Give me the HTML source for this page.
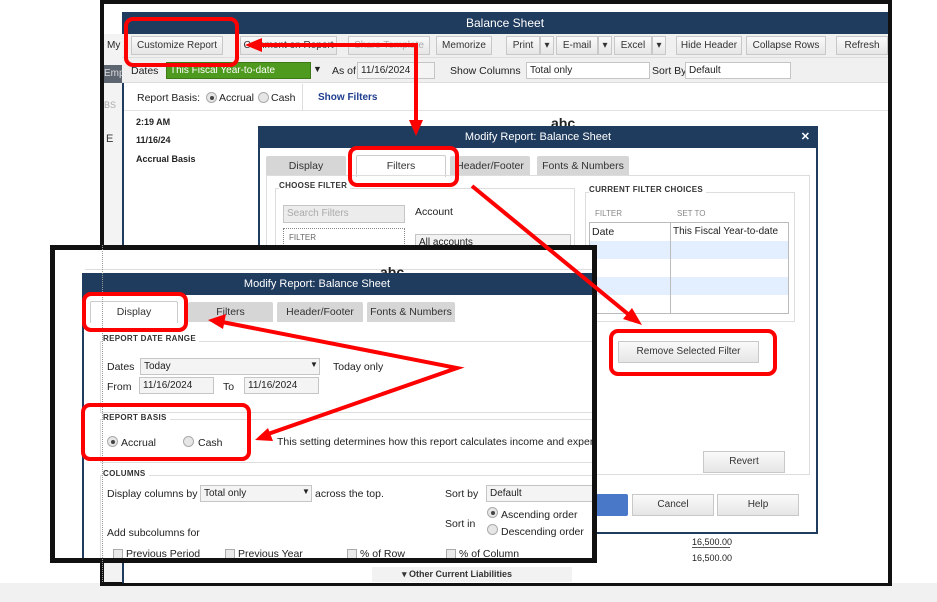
<!DOCTYPE html>
<html><head><meta charset="utf-8"><style>
*{box-sizing:border-box;margin:0;padding:0}
body{width:937px;height:602px;position:relative;overflow:hidden;background:#fff;font-family:"Liberation Sans",sans-serif;font-size:10.5px;color:#222}
.a{position:absolute}
.nav{background:#1f3b5e;color:#fff;text-align:center;font-size:12px}
.btn{position:absolute;height:19px;border:1px solid #c8c8c8;background:linear-gradient(#fafafa,#e6e6e6);font-size:10px;text-align:center;line-height:17px;color:#333}
.inp{position:absolute;height:17px;border:1px solid #c5c5c5;background:#f4f4f4;font-size:10px;line-height:15px;padding-left:3px}
.tab{position:absolute;height:20px;background:#d6d6d6;text-align:center;line-height:20px;font-size:10.5px;color:#333;border-radius:2px 2px 0 0}
.tab.on{background:#fff;border:1px solid #ccc;border-bottom:none}
.lbl{position:absolute;font-size:8px;font-weight:bold;color:#333;letter-spacing:.3px;background:#fff;padding-right:3px}
.rad{position:absolute;width:11px;height:11px;border-radius:50%;border:1px solid #aaa;background:#e6e6e6}
.chk{position:absolute;width:10px;height:10px;border:1px solid #aaa;background:#e9e9e9}
</style></head><body>
<div class="a" style="left:0;top:583px;width:937px;height:19px;background:#f1f1f1"></div>
<div class="a" style="left:100px;top:0;width:792px;height:586px;border:4px solid #111;background:#fff"></div>
<div class="a" style="left:104px;top:4px;width:784px;height:8px;background:#fff"></div>
<div class="a" style="left:104px;top:34px;width:18px;height:548px;background:#f3f3f3"></div>
<div class="a" style="left:107px;top:40px;font-size:10px">My</div>
<div class="a" style="left:104px;top:65px;width:18px;height:18px;background:#5d6570;color:#ddd;font-size:10px;line-height:18px">Emp</div>
<div class="a" style="left:104px;top:100px;color:#aaa;font-size:9px">BS</div>
<div class="a" style="left:106px;top:133px;color:#333;font-size:11px">E</div>
<div class="a" style="left:122px;top:12px;width:766px;height:571px;border-left:2px solid #1f3b5e;background:#fff"></div>
<div class="a nav" style="left:122px;top:12px;width:766px;height:22px;line-height:22px">Balance Sheet</div>
<div class="a" style="left:122px;top:34px;width:766px;height:24px;background:#f0f0f0;border-bottom:1px solid #ddd"></div>
<div class="btn" style="left:131px;top:36px;width:92px">Customize Report</div>
<div class="btn" style="left:240px;top:36px;width:97px">Comment on Report</div>
<div class="btn" style="left:348px;top:36px;width:82px;color:#aaa">Share Template</div>
<div class="btn" style="left:436px;top:36px;width:56px">Memorize</div>
<div class="btn" style="left:506px;top:36px;width:34px">Print</div>
<div class="btn" style="left:540px;top:36px;width:14px">▾</div>
<div class="btn" style="left:556px;top:36px;width:42px">E-mail</div>
<div class="btn" style="left:598px;top:36px;width:14px">▾</div>
<div class="btn" style="left:614px;top:36px;width:38px">Excel</div>
<div class="btn" style="left:652px;top:36px;width:14px">▾</div>
<div class="btn" style="left:676px;top:36px;width:66px">Hide Header</div>
<div class="btn" style="left:746px;top:36px;width:80px">Collapse Rows</div>
<div class="btn" style="left:836px;top:36px;width:52px">Refresh</div>
<div class="a" style="left:122px;top:58px;width:766px;height:25px;background:#f0f0f0;border-bottom:1px solid #ddd"></div>
<div class="a" style="left:131px;top:65px">Dates</div>
<div class="inp" style="left:166px;top:62px;width:145px;background:#4e9a1e;color:#fff;border-color:#3d7a17">This Fiscal Year-to-date</div>
<div class="a" style="left:313px;top:64px;font-size:9px">▼</div>
<div class="a" style="left:332px;top:65px">As of</div>
<div class="inp" style="left:357px;top:62px;width:78px">11/16/2024</div>
<div class="a" style="left:450px;top:65px">Show Columns</div>
<div class="inp" style="left:526px;top:62px;width:124px;background:#fff">Total only</div>
<div class="a" style="left:652px;top:65px">Sort By</div>
<div class="inp" style="left:685px;top:62px;width:106px;background:#fff">Default</div>
<div class="a" style="left:124px;top:84px;width:764px;height:27px;border-bottom:1px solid #e2e2e2"></div>
<div class="a" style="left:137px;top:92px">Report Basis:</div>
<div class="rad" style="left:206px;top:92px"></div><div class="a" style="left:209.5px;top:95.5px;width:4px;height:4px;border-radius:50%;background:#444"></div>
<div class="a" style="left:219px;top:92px">Accrual</div>
<div class="rad" style="left:258px;top:92px"></div>
<div class="a" style="left:271px;top:92px">Cash</div>
<div class="a" style="left:302px;top:84px;width:1px;height:27px;background:#ddd"></div>
<div class="a" style="left:318px;top:92px;color:#1f3d8f;font-weight:bold;font-size:10px">Show Filters</div>
<div class="a" style="left:136px;top:117px;font-size:9px;font-weight:bold">2:19 AM</div>
<div class="a" style="left:136px;top:135px;font-size:9px;font-weight:bold">11/16/24</div>
<div class="a" style="left:136px;top:154px;font-size:9px;font-weight:bold">Accrual Basis</div>
<div class="a" style="left:551px;top:115px;font-size:14px;font-weight:bold">abc</div>
<div class="a" style="left:692px;top:537px;font-size:9px">16,500.00</div>
<div class="a" style="left:692px;top:547px;width:38px;height:1px;background:#555"></div>
<div class="a" style="left:692px;top:553px;font-size:9px">16,500.00</div>
<div class="a" style="left:372px;top:567px;width:200px;height:15px;background:#f2f2f2;font-size:9px;font-weight:bold;color:#333;padding-left:30px;line-height:15px">▾ Other Current Liabilities</div>

<div class="a" style="left:258px;top:126px;width:560px;height:408px;background:#fff;border:2px solid #1f3b5e"></div>
<div class="a nav" style="left:258px;top:126px;width:560px;height:22px;line-height:22px;font-size:11px">Modify Report: Balance Sheet<span style="position:absolute;right:8px;font-weight:bold">✕</span></div>
<div class="tab" style="left:266px;top:156px;width:80px">Display</div>
<div class="tab on" style="left:356px;top:155px;width:90px;height:22px">Filters</div>
<div class="tab" style="left:450px;top:156px;width:80px">Header/Footer</div>
<div class="tab" style="left:537px;top:156px;width:92px">Fonts &amp; Numbers</div>
<div class="a" style="left:266px;top:175px;width:544px;height:300px;border:1px solid #ddd"></div>
<div class="a" style="left:275px;top:188px;width:300px;height:70px;border:1px solid #ddd"></div>
<div class="lbl" style="left:279px;top:181px">CHOOSE FILTER</div>
<div class="inp" style="left:283px;top:205px;width:122px;height:18px;color:#aaa;background:#ececec">Search Filters</div>
<div class="a" style="left:283px;top:228px;width:122px;height:30px;border:1px dotted #888;font-size:8px;color:#666;padding:4px 5px">FILTER</div>
<div class="a" style="left:415px;top:206px">Account</div>
<div class="inp" style="left:415px;top:234px;width:156px;background:#f2f2f2">All accounts</div>
<div class="a" style="left:585px;top:192px;width:210px;height:130px;border:1px solid #ddd"></div>
<div class="lbl" style="left:589px;top:185px">CURRENT FILTER CHOICES</div>
<div class="a" style="left:595px;top:209px;font-size:8px;color:#888">FILTER</div>
<div class="a" style="left:677px;top:209px;font-size:8px;color:#888">SET TO</div>
<div class="a" style="left:589px;top:222px;width:200px;height:92px;border:1px solid #bbb;background:repeating-linear-gradient(#fff 0,#fff 18px,#e3efff 18px,#e3efff 36px)"></div>
<div class="a" style="left:670px;top:222px;width:1px;height:92px;background:#bbb"></div>
<div class="a" style="left:592px;top:226px">Date</div>
<div class="a" style="left:673px;top:226px;font-size:10px">This Fiscal Year-to-date</div>
<div class="btn" style="left:618px;top:341px;width:141px;height:22px;line-height:20px">Remove Selected Filter</div>
<div class="btn" style="left:703px;top:451px;width:82px;height:22px;line-height:20px">Revert</div>
<div class="a" style="left:590px;top:494px;width:38px;height:22px;background:#4a78c8;border-radius:2px"></div>
<div class="btn" style="left:632px;top:494px;width:82px;height:22px;line-height:20px">Cancel</div>
<div class="btn" style="left:717px;top:494px;width:82px;height:22px;line-height:20px">Help</div>

<div class="a" style="left:50px;top:245px;width:547px;height:318px;border:5px solid #111;background:#fff;overflow:hidden">
 <div class="a" style="left:30px;top:0;width:520px;height:20px;border-bottom:1px solid #ddd"></div>
 <div class="a" style="left:325px;top:14px;font-size:14px;font-weight:bold">abc</div>
 <div class="a" style="left:27px;top:23px;width:520px;height:300px;border-left:2px solid #1f3b5e"></div>
 <div class="a nav" style="left:27px;top:23px;width:520px;height:22px;line-height:22px;font-size:11px;padding-right:50px">Modify Report: Balance Sheet</div>
 <div class="a" style="left:0;top:-3px;width:547px;height:320px">
 <div class="tab on" style="left:35px;top:54px;width:88px;height:22px">Display</div>
 <div class="tab" style="left:133px;top:55px;width:85px">Filters</div>
 <div class="tab" style="left:222px;top:55px;width:86px">Header/Footer</div>
 <div class="tab" style="left:312px;top:55px;width:88px">Fonts &amp; Numbers</div>
 <div class="a" style="left:45px;top:94px;width:500px;height:72px;border:1px solid #ddd"></div>
 <div class="lbl" style="left:48px;top:87px">REPORT DATE RANGE</div>
 <div class="a" style="left:52px;top:114px">Dates</div>
 <div class="inp" style="left:85px;top:111px;width:180px;background:#f4f4f4">Today</div>
 <div class="a" style="left:255px;top:113px;font-size:8px">▼</div>
 <div class="a" style="left:278px;top:114px">Today only</div>
 <div class="a" style="left:52px;top:134px">From</div>
 <div class="inp" style="left:84px;top:130px;width:75px">11/16/2024</div>
 <div class="a" style="left:168px;top:134px">To</div>
 <div class="inp" style="left:189px;top:130px;width:75px">11/16/2024</div>
 <div class="a" style="left:45px;top:172px;width:500px;height:44px;border:1px solid #ddd"></div>
 <div class="lbl" style="left:48px;top:166px">REPORT BASIS</div>
 <div class="rad" style="left:52px;top:189px"></div><div class="a" style="left:55.5px;top:192.5px;width:4px;height:4px;border-radius:50%;background:#444"></div>
 <div class="a" style="left:66px;top:190px">Accrual</div>
 <div class="rad" style="left:128px;top:189px"></div>
 <div class="a" style="left:143px;top:190px">Cash</div>
 <div class="a" style="left:222px;top:189px;white-space:nowrap">This setting determines how this report calculates income and expenses</div>
 <div class="a" style="left:45px;top:228px;width:500px;height:100px;border:1px solid #ddd"></div>
 <div class="lbl" style="left:48px;top:222px">COLUMNS</div>
 <div class="a" style="left:52px;top:241px">Display columns by</div>
 <div class="inp" style="left:145px;top:238px;width:112px;background:#f4f4f4">Total only</div>
 <div class="a" style="left:247px;top:240px;font-size:8px">▼</div>
 <div class="a" style="left:260px;top:241px">across the top.</div>
 <div class="a" style="left:390px;top:241px">Sort by</div>
 <div class="inp" style="left:431px;top:238px;width:120px;background:#f4f4f4">Default</div>
 <div class="a" style="left:390px;top:271px">Sort in</div>
 <div class="rad" style="left:432px;top:260px"></div><div class="a" style="left:435.5px;top:263.5px;width:4px;height:4px;border-radius:50%;background:#444"></div>
 <div class="a" style="left:446px;top:262px">Ascending order</div>
 <div class="rad" style="left:432px;top:277px"></div>
 <div class="a" style="left:446px;top:279px">Descending order</div>
 <div class="a" style="left:52px;top:280px">Add subcolumns for</div>
 <div class="chk" style="left:58px;top:302px"></div><div class="a" style="left:71px;top:301px">Previous Period</div>
 <div class="chk" style="left:170px;top:302px"></div><div class="a" style="left:183px;top:301px">Previous Year</div>
 <div class="chk" style="left:292px;top:302px"></div><div class="a" style="left:305px;top:301px">% of Row</div>
 <div class="chk" style="left:391px;top:302px"></div><div class="a" style="left:404px;top:301px">% of Column</div>
 </div>
</div>
<div class="a" style="left:102px;top:245px;width:0;height:337px;border-left:1px dotted #999"></div>

<svg class="a" style="left:0;top:0" width="937" height="602" viewBox="0 0 937 602">
 <g fill="none" stroke="#f00" stroke-width="4">
  <rect x="126" y="19" width="111" height="46" rx="7"/>
  <rect x="350" y="148" width="107" height="37" rx="7"/>
  <rect x="84" y="294" width="102" height="36" rx="7"/>
  <rect x="83" y="405" width="166" height="54" rx="7"/>
  <rect x="611" y="331" width="164" height="43" rx="7"/>
  <polyline points="416,122 416,45 258,45"/>
  <line x1="472" y1="186" x2="628" y2="314"/>
  <polyline points="222,322 457,368 268,434"/>
 </g>
 <g fill="#f00">
  <polygon points="245,45 262,38 262,52"/>
  <polygon points="416,136 409,120 423,120"/>
  <polygon points="642,325 623,319 632,308"/>
  <polygon points="208,320 226,314 223,329"/>
  <polygon points="255,440 268,428 273,441"/>
 </g>
</svg>
</body></html>
